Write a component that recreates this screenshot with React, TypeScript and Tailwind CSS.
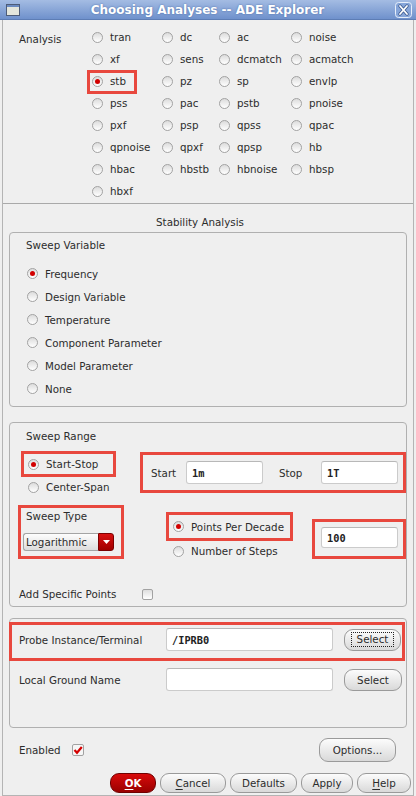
import type { ReactNode } from "react";

const analyses = [
  ["tran", "dc", "ac", "noise"],
  ["xf", "sens", "dcmatch", "acmatch"],
  ["stb", "pz", "sp", "envlp"],
  ["pss", "pac", "pstb", "pnoise"],
  ["pxf", "psp", "qpss", "qpac"],
  ["qpnoise", "qpxf", "qpsp", "hb"],
  ["hbac", "hbstb", "hbnoise", "hbsp"],
  ["hbxf"],
];

const sweepVars = ["Frequency", "Design Variable", "Temperature", "Component Parameter", "Model Parameter", "None"];

function Radio({ on }: { on?: boolean }) {
  return (
    <span className="flex h-[11px] w-[11px] shrink-0 items-center justify-center rounded-full border border-[#a2a2a2] bg-[linear-gradient(to_bottom,#dcdcdc,#ffffff)]">
      {on && <span className="h-[5px] w-[5px] rounded-full bg-[#d20000]" />}
    </span>
  );
}

function RadioRow({ label, on, className = "" }: { label: string; on?: boolean; className?: string }) {
  return (
    <div className={`flex items-center gap-[7px] ${className}`}>
      <Radio on={on} />
      <span>{label}</span>
    </div>
  );
}

function Btn({ children, className = "" }: { children: ReactNode; className?: string }) {
  return (
    <div
      className={`flex items-center justify-center rounded-[9px] border border-[#9a9a9a] bg-[linear-gradient(to_bottom,#fcfcfc,#d9d9d9)] ${className}`}
    >
      {children}
    </div>
  );
}

function Field({ value = "", className = "" }: { value?: string; className?: string }) {
  return (
    <div
      className={`flex items-center rounded-[3px] border border-[#cbcbcb] border-t-[#b8b8b8] bg-white pl-[5px] font-['DejaVu_Sans_Mono',monospace] font-bold text-[#222] ${className}`}
    >
      {value}
    </div>
  );
}

const red = "border-[3px] border-[#e8483e]";

export default function App() {
  return (
    <div className="flex h-[796px] w-[416px] flex-col bg-[#efefef] font-['DejaVu_Sans',sans-serif] text-[10.3px] leading-[14px] text-[#2c2c2c]">
      {/* title bar */}
      <div className="flex h-[20px] shrink-0 items-center border-b border-[#5d7db5] bg-[linear-gradient(to_bottom,#a4bce3,#6f91cc)]">
        <svg width="14" height="12" viewBox="0 0 14 12" className="ml-[6px]">
          <rect x="0.5" y="0.5" width="13" height="11" fill="#e4e6dc" stroke="#4d5c78" />
          <rect x="1" y="1" width="12" height="2" fill="#6b8ac0" />
        </svg>
        <div className="flex-1 text-center text-[12px] font-bold text-white [text-shadow:0_0_2px_#4a6aa5]">
          Choosing Analyses -- ADE Explorer
        </div>
        <svg width="17" height="16" viewBox="0 0 17 16" className="mr-[4px]">
          <rect x="0.5" y="0.5" width="16" height="15" rx="3" fill="#86a5d9" stroke="#e6eefa" />
          <path d="M5 4 L12 12 M12 4 L5 12" stroke="#3d5a8f" strokeWidth="3.4" strokeLinecap="round" />
          <path d="M5 4 L12 12 M12 4 L5 12" stroke="#ffffff" strokeWidth="1.8" strokeLinecap="round" />
        </svg>
      </div>

      {/* body */}
      <div className="mx-[2px] flex flex-1 flex-col border-x border-b border-[#b4b4b4]">
        {/* analysis chooser */}
        <div className="flex h-[183px] shrink-0 pt-[6px]">
          <div className="w-[89px] pl-[16px] pt-[2px] leading-[22px]">Analysis</div>
          <div className="grid auto-rows-[22px] grid-cols-[70px_57px_72px_auto]">
            {analyses.flat().map((name) => (
              <div key={name} className="relative flex items-center gap-[7px]">
                {name === "stb" && (
                  <span className={`absolute left-[-5px] top-0 h-[24px] w-[50px] ${red}`} />
                )}
                <Radio on={name === "stb"} />
                <span>{name}</span>
              </div>
            ))}
          </div>
        </div>

        <div className="h-px shrink-0 bg-[#a9a9a9]" />

        <div className="h-[28px] shrink-0 pr-[16px] pt-[11px] text-center">Stability Analysis</div>

        {/* sweep variable */}
        <div className="mx-[6px] flex h-[175px] shrink-0 flex-col rounded-[4px] border border-[#b0b0b0]">
          <div className="pl-[16px] pt-[5px]">Sweep Variable</div>
          <div className="mt-[10px] flex flex-col pl-[17px]">
            {sweepVars.map((v) => (
              <RadioRow key={v} label={v} on={v === "Frequency"} className="h-[23px]" />
            ))}
          </div>
        </div>

        {/* sweep range */}
        <div className="mx-[6px] mt-[15px] flex h-[185px] shrink-0 flex-col rounded-[4px] border border-[#b0b0b0]">
          <div className="pl-[16px] pt-[6px]">Sweep Range</div>
          <div className="mt-[8px] flex">
            <div className="flex flex-col">
              <div className={`ml-[11px] flex h-[26px] w-[95px] items-center pl-[4px] ${red}`}>
                <RadioRow label="Start-Stop" on />
              </div>
              <RadioRow label="Center-Span" className="ml-[18px] h-[20px]" />
            </div>
            <div className={`ml-[24px] mt-[1px] flex h-[41px] w-[266px] items-center pl-[8px] ${red}`}>
              <span className="w-[35px]">Start</span>
              <Field value="1m" className="h-[23px] w-[77px]" />
              <span className="ml-[16px] w-[42px]">Stop</span>
              <Field value="1T" className="h-[23px] w-[77px]" />
            </div>
          </div>

          <div className="flex">
            <div className={`ml-[8px] mt-[8px] flex h-[54px] w-[106px] flex-col pl-[2px] ${red}`}>
              <span className="pl-[3px] pt-[1px]">Sweep Type</span>
              <div className="mt-[10px] flex h-[18px] w-[91px]">
                <div className="flex flex-1 items-center rounded-l-[3px] border border-r-0 border-[#a4a4a4] bg-[linear-gradient(to_bottom,#fdfdfd,#dcdcdc)] pl-[2px]">
                  Logarithmic
                </div>
                <div className="flex w-[16px] items-center justify-center rounded-r-[3px] border border-[#7c0000] bg-[linear-gradient(to_bottom,#d81010,#a00000)]">
                  <svg width="7" height="4" viewBox="0 0 7 4">
                    <path d="M0 0 H7 L3.5 4 Z" fill="#ffffff" />
                  </svg>
                </div>
              </div>
            </div>

            <div className="ml-[42px] mt-[15px] flex flex-col">
              <div className={`flex h-[29px] w-[127px] items-center pl-[4px] ${red}`}>
                <RadioRow label="Points Per Decade" on />
              </div>
              <RadioRow label="Number of Steps" className="ml-[7px] h-[20px]" />
            </div>

            <div className={`ml-[19px] mt-[22px] flex h-[40px] w-[94px] pl-[6px] pt-[5px] ${red}`}>
              <Field value="100" className="h-[21px] w-[77px]" />
            </div>
          </div>

          <div className="mt-[26px] flex items-center pl-[9px]">
            <span className="w-[123px]">Add Specific Points</span>
            <span className="h-[11px] w-[11px] rounded-[2px] border border-[#a2a2a2] bg-[linear-gradient(to_bottom,#dedede,#ffffff)]" />
          </div>
        </div>

        {/* probe */}
        <div className="mx-[6px] mt-[11px] flex h-[110px] shrink-0 flex-col rounded-[4px] border border-[#b0b0b0]">
          <div className={`ml-[-1px] mt-[3px] flex h-[39px] w-[396px] items-center pb-[4px] pl-[7px] ${red}`}>
            <span className="w-[147px]">Probe Instance/Terminal</span>
            <Field value="/IPRB0" className="h-[23px] w-[167px]" />
            <Btn className="ml-[11px] h-[22px] w-[57px]">
              <span className="border border-dotted border-[#222] px-[5px] leading-[13px]">Select</span>
            </Btn>
          </div>
          <div className="mt-[7px] flex items-center pl-[9px]">
            <span className="w-[147px]">Local Ground Name</span>
            <Field className="h-[23px] w-[167px]" />
            <Btn className="ml-[11px] h-[22px] w-[58px]">Select</Btn>
          </div>
        </div>

        {/* footer */}
        <div className="mt-[10px] flex h-[24px] shrink-0 items-center pl-[16px] pr-[17px]">
          <span className="w-[53px]">Enabled</span>
          <svg width="12" height="12" viewBox="0 0 12 12">
            <rect x="0.5" y="0.5" width="11" height="11" rx="1.5" fill="#f6f6f6" stroke="#a2a2a2" />
            <path d="M2.5 6 L5 8.8 L9.8 3" stroke="#d40000" strokeWidth="2.2" fill="none" />
          </svg>
          <Btn className="ml-auto h-[24px] w-[77px]">Options...</Btn>
        </div>

        <div className="mr-[2px] mt-[11px] flex h-[20px] shrink-0 justify-end gap-[4px]">
          <div className="flex w-[46px] items-center justify-center rounded-[9px] border border-[#700000] bg-[linear-gradient(to_bottom,#d80a0a,#9a0000)] font-bold text-white">
            <span className="underline underline-offset-2">O</span>K
          </div>
          <Btn className="w-[66px]">
            <span className="underline underline-offset-2">C</span>ancel
          </Btn>
          <Btn className="w-[67px]">Defaults</Btn>
          <Btn className="w-[52px]">Apply</Btn>
          <Btn className="w-[54px]">
            <span className="underline underline-offset-2">H</span>elp
          </Btn>
        </div>
      </div>
    </div>
  );
}
